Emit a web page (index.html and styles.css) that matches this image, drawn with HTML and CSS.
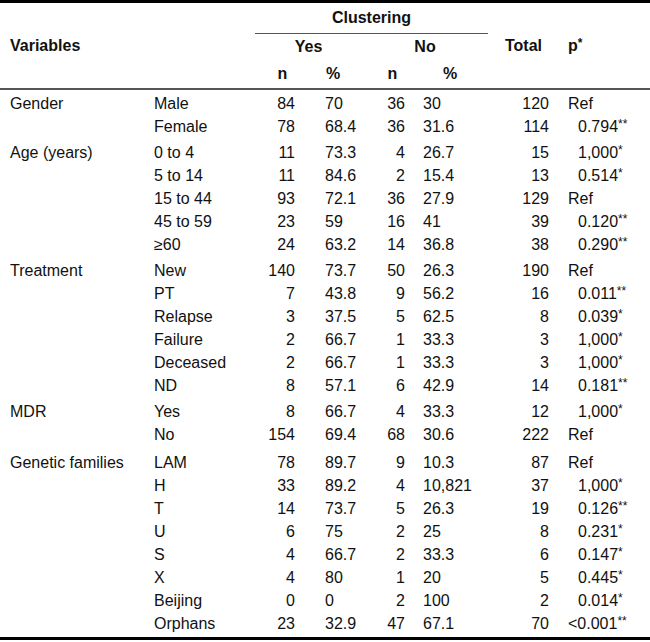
FILE: index.html
```html
<!DOCTYPE html>
<html lang="en">
<head>
  <meta charset="UTF-8" />
  <title>Clustering by variables</title>
  <link rel="stylesheet" href="styles.css">
</head>
<body>

  <table class="stats">
    <colgroup>
      <col class="c-var">
      <col class="c-cat">
      <col class="c-yn">
      <col class="c-yp">
      <col class="c-nn">
      <col class="c-np">
      <col class="c-tot">
      <col class="c-p">
    </colgroup>
    <thead>
      <tr class="h1">
        <th class="var" colspan="2" rowspan="3">Variables</th>
        <th class="clus" colspan="4">Clustering</th>
        <th class="tot" rowspan="3">Total</th>
        <th class="p" rowspan="3">p<sup>*</sup></th>
      </tr>
      <tr class="h2">
        <th class="yes" colspan="2">Yes</th>
        <th class="no" colspan="2">No</th>
      </tr>
      <tr class="h3">
        <th class="hn">n</th>
        <th class="hp">%</th>
        <th class="hn">n</th>
        <th class="hp2">%</th>
      </tr>
    </thead>
    <tbody>
      <tr class="first">
        <td class="var">Gender</td><td class="cat">Male</td>
        <td class="n">84</td><td class="pc">70</td><td class="n2">36</td><td class="pc2">30</td>
        <td class="tot">120</td><td class="p">Ref</td>
      </tr>
      <tr>
        <td class="var"></td><td class="cat">Female</td>
        <td class="n">78</td><td class="pc">68.4</td><td class="n2">36</td><td class="pc2">31.6</td>
        <td class="tot">114</td><td class="p num">0.794<sup>**</sup></td>
      </tr>

      <tr class="grp">
        <td class="var">Age (years)</td><td class="cat">0 to 4</td>
        <td class="n">11</td><td class="pc">73.3</td><td class="n2">4</td><td class="pc2">26.7</td>
        <td class="tot">15</td><td class="p num">1,000<sup>*</sup></td>
      </tr>
      <tr>
        <td class="var"></td><td class="cat">5 to 14</td>
        <td class="n">11</td><td class="pc">84.6</td><td class="n2">2</td><td class="pc2">15.4</td>
        <td class="tot">13</td><td class="p num">0.514<sup>*</sup></td>
      </tr>
      <tr>
        <td class="var"></td><td class="cat">15 to 44</td>
        <td class="n">93</td><td class="pc">72.1</td><td class="n2">36</td><td class="pc2">27.9</td>
        <td class="tot">129</td><td class="p">Ref</td>
      </tr>
      <tr>
        <td class="var"></td><td class="cat">45 to 59</td>
        <td class="n">23</td><td class="pc">59</td><td class="n2">16</td><td class="pc2">41</td>
        <td class="tot">39</td><td class="p num">0.120<sup>**</sup></td>
      </tr>
      <tr>
        <td class="var"></td><td class="cat">≥60</td>
        <td class="n">24</td><td class="pc">63.2</td><td class="n2">14</td><td class="pc2">36.8</td>
        <td class="tot">38</td><td class="p num">0.290<sup>**</sup></td>
      </tr>

      <tr class="grp">
        <td class="var">Treatment</td><td class="cat">New</td>
        <td class="n">140</td><td class="pc">73.7</td><td class="n2">50</td><td class="pc2">26.3</td>
        <td class="tot">190</td><td class="p">Ref</td>
      </tr>
      <tr>
        <td class="var"></td><td class="cat">PT</td>
        <td class="n">7</td><td class="pc">43.8</td><td class="n2">9</td><td class="pc2">56.2</td>
        <td class="tot">16</td><td class="p num">0.011<sup>**</sup></td>
      </tr>
      <tr>
        <td class="var"></td><td class="cat">Relapse</td>
        <td class="n">3</td><td class="pc">37.5</td><td class="n2">5</td><td class="pc2">62.5</td>
        <td class="tot">8</td><td class="p num">0.039<sup>*</sup></td>
      </tr>
      <tr>
        <td class="var"></td><td class="cat">Failure</td>
        <td class="n">2</td><td class="pc">66.7</td><td class="n2">1</td><td class="pc2">33.3</td>
        <td class="tot">3</td><td class="p num">1,000<sup>*</sup></td>
      </tr>
      <tr>
        <td class="var"></td><td class="cat">Deceased</td>
        <td class="n">2</td><td class="pc">66.7</td><td class="n2">1</td><td class="pc2">33.3</td>
        <td class="tot">3</td><td class="p num">1,000<sup>*</sup></td>
      </tr>
      <tr>
        <td class="var"></td><td class="cat">ND</td>
        <td class="n">8</td><td class="pc">57.1</td><td class="n2">6</td><td class="pc2">42.9</td>
        <td class="tot">14</td><td class="p num">0.181<sup>**</sup></td>
      </tr>

      <tr class="grp">
        <td class="var">MDR</td><td class="cat">Yes</td>
        <td class="n">8</td><td class="pc">66.7</td><td class="n2">4</td><td class="pc2">33.3</td>
        <td class="tot">12</td><td class="p num">1,000<sup>*</sup></td>
      </tr>
      <tr>
        <td class="var"></td><td class="cat">No</td>
        <td class="n">154</td><td class="pc">69.4</td><td class="n2">68</td><td class="pc2">30.6</td>
        <td class="tot">222</td><td class="p">Ref</td>
      </tr>

      <tr class="grp wide">
        <td class="var">Genetic families</td><td class="cat">LAM</td>
        <td class="n">78</td><td class="pc">89.7</td><td class="n2">9</td><td class="pc2">10.3</td>
        <td class="tot">87</td><td class="p">Ref</td>
      </tr>
      <tr>
        <td class="var"></td><td class="cat">H</td>
        <td class="n">33</td><td class="pc">89.2</td><td class="n2">4</td><td class="pc2">10,821</td>
        <td class="tot">37</td><td class="p num">1,000<sup>*</sup></td>
      </tr>
      <tr>
        <td class="var"></td><td class="cat">T</td>
        <td class="n">14</td><td class="pc">73.7</td><td class="n2">5</td><td class="pc2">26.3</td>
        <td class="tot">19</td><td class="p num">0.126<sup>**</sup></td>
      </tr>
      <tr>
        <td class="var"></td><td class="cat">U</td>
        <td class="n">6</td><td class="pc">75</td><td class="n2">2</td><td class="pc2">25</td>
        <td class="tot">8</td><td class="p num">0.231<sup>*</sup></td>
      </tr>
      <tr>
        <td class="var"></td><td class="cat">S</td>
        <td class="n">4</td><td class="pc">66.7</td><td class="n2">2</td><td class="pc2">33.3</td>
        <td class="tot">6</td><td class="p num">0.147<sup>*</sup></td>
      </tr>
      <tr>
        <td class="var"></td><td class="cat">X</td>
        <td class="n">4</td><td class="pc">80</td><td class="n2">1</td><td class="pc2">20</td>
        <td class="tot">5</td><td class="p num">0.445<sup>*</sup></td>
      </tr>
      <tr>
        <td class="var"></td><td class="cat">Beijing</td>
        <td class="n">0</td><td class="pc">0</td><td class="n2">2</td><td class="pc2">100</td>
        <td class="tot">2</td><td class="p num">0.014<sup>*</sup></td>
      </tr>
      <tr class="last">
        <td class="var"></td><td class="cat">Orphans</td>
        <td class="n">23</td><td class="pc">32.9</td><td class="n2">47</td><td class="pc2">67.1</td>
        <td class="tot">70</td><td class="p">&lt;0.001<sup>**</sup></td>
      </tr>
    </tbody>
  </table>

</body>
</html>
```

FILE: styles.css
```css
html, body {
  margin: 0;
  background: #fff;
  color: #111;
  font-family: "Liberation Sans", Arial, sans-serif;
  font-size: 16px;
}
.stats {
  width: 650px;
  table-layout: fixed;
  border-collapse: separate;
  border-spacing: 0;
  border-top: 3px solid #000;
  border-bottom: 3px solid #000;
}
.c-var { width: 150px; }
.c-cat { width: 105px; }
.c-yn  { width: 55px; }
.c-yp  { width: 60px; }
.c-nn  { width: 45px; }
.c-np  { width: 73px; }
.c-tot { width: 71px; }
.c-p   { width: 91px; }

th, td {
  padding: 0;
  white-space: nowrap;
}
th {
  font-weight: bold;
}

/* header */
.h1 th { line-height: 30px; }
.h2 th { line-height: 25px; }
.h3 th { line-height: 29px; }
th.clus {
  text-align: center;
  border-bottom: 1px solid #555;
}
th.var {
  text-align: left;
  padding-left: 10px;
  border-bottom: 2px solid #555;
}
th.tot {
  text-align: center;
  border-bottom: 2px solid #555;
}
th.p {
  text-align: left;
  padding-left: 9px;
  border-bottom: 2px solid #555;
}
th.yes,
th.no {
  text-align: center;
  padding-right: 8px;
}
.h3 th {
  border-bottom: 2px solid #555;
}
th.hn { text-align: center; }
th.hp { text-align: left; padding-left: 16px; }
th.hp2 { text-align: left; padding-left: 28px; }

/* body */
td {
  line-height: 23px;
  vertical-align: top;
}
.first td { padding-top: 2px; }
.grp td { padding-top: 3px; }
.grp.wide td { padding-top: 5px; }
.last td { padding-bottom: 2px; }

td.var { padding-left: 10px; }
td.cat { padding-left: 4px; }
td.n { text-align: right; padding-right: 15px; }
td.pc { padding-left: 15px; }
td.n2 { text-align: right; padding-right: 10px; }
td.pc2 { padding-left: 8px; }
td.tot { text-align: right; padding-right: 10px; }
td.p { padding-left: 9px; }
td.p.num { padding-left: 19px; }

sup {
  font-size: 12px;
  line-height: 0;
  vertical-align: 4px;
}
```
